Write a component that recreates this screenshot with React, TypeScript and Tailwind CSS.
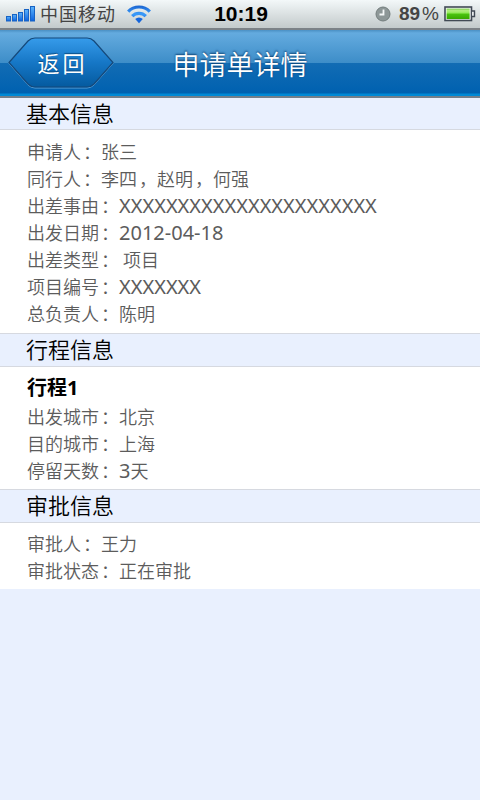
import { Fragment } from "react";

type Row = { label: string; value: string; gap?: boolean };

const basic: Row[] = [
  { label: "申请人", value: "张三" },
  { label: "同行人", value: "李四，赵明，何强" },
  { label: "出差事由", value: "XXXXXXXXXXXXXXXXXXXXXX" },
  { label: "出发日期", value: "2012-04-18" },
  { label: "出差类型", value: "项目", gap: true },
  { label: "项目编号", value: "XXXXXXX" },
  { label: "总负责人", value: "陈明" },
];

const trip: Row[] = [
  { label: "出发城市", value: "北京" },
  { label: "目的城市", value: "上海" },
  { label: "停留天数", value: "3天" },
];

const approval: Row[] = [
  { label: "审批人", value: "王力" },
  { label: "审批状态", value: "正在审批" },
];

// Latin runs are set slightly larger; full-width punctuation gets a little room before it.
function Mixed({ text }: { text: string }) {
  return (
    <>
      {text.split(/([：，]|[A-Za-z0-9-]+)/).map((part, i) => {
        if (/^[：，]$/.test(part)) {
          return (
            <span key={i} className="pl-[2px]">
              {part}
            </span>
          );
        }
        if (/^[A-Za-z0-9-]+$/.test(part)) {
          return (
            <span key={i} className="text-[20px] leading-none font-normal">
              {part}
            </span>
          );
        }
        return <Fragment key={i}>{part}</Fragment>;
      })}
    </>
  );
}

function Rows({ rows }: { rows: Row[] }) {
  return (
    <dl className="text-[18px] leading-[27px] font-[350] text-[#5c5c5c]">
      {rows.map((row) => (
        <div key={row.label} className="flex h-[27px] items-baseline">
          <dt className="whitespace-nowrap">
            <Mixed text={row.label + "："} />
          </dt>
          <dd className={row.gap ? "pl-1" : ""}>
            <Mixed text={row.value} />
          </dd>
        </div>
      ))}
    </dl>
  );
}

function SectionTitle({ children }: { children: string }) {
  return (
    <h2 className="border-y border-[#d6d9e0] bg-[#e9f0fe] px-[26px] pb-[2px] text-[22px] leading-[30px] font-[350] text-black">
      {children}
    </h2>
  );
}

function Signal() {
  return (
    <svg width="30" height="16" viewBox="0 0 30 16" aria-hidden="true">
      <defs>
        <linearGradient id="sig" x1="0" y1="0" x2="0" y2="1">
          <stop offset="0" stopColor="#5cb4fb" />
          <stop offset="1" stopColor="#0c62e0" />
        </linearGradient>
      </defs>
      {[5, 7, 9, 12, 15].map((h, i) => (
        <rect key={h} x={0.5 + i * 6} y={15.5 - h} width="4" height={h - 0.5} fill="url(#sig)" stroke="#1763c4" strokeWidth="1" />
      ))}
    </svg>
  );
}

function Wifi() {
  return (
    <svg width="26" height="20" viewBox="0 0 26 20" aria-hidden="true">
      <defs>
        <linearGradient id="wifi" x1="0" y1="0" x2="0" y2="20" gradientUnits="userSpaceOnUse">
          <stop offset="0" stopColor="#1459c8" />
          <stop offset="0.5" stopColor="#3a9bfa" />
          <stop offset="1" stopColor="#0f5fdc" />
        </linearGradient>
      </defs>
      <g fill="none" stroke="url(#wifi)" strokeWidth="3.2">
        <path d="M2.2 7.6A15 15 0 0 1 23.8 7.6" />
        <path d="M6.2 12.2A9.4 9.4 0 0 1 19.8 12.2" />
      </g>
      <path d="M9.2 15a5.4 5.4 0 0 1 7.600 0L13 19.200Z" fill="#1465dc" />
    </svg>
  );
}

function Clock() {
  return (
    <svg width="16" height="16" viewBox="0 0 16 16" aria-hidden="true">
      <circle cx="8" cy="8" r="7" fill="#8d9797" stroke="#737d7d" />
      <path d="M8.5 3.500v5H4.500" fill="none" stroke="#f4f7f7" strokeWidth="1.8" />
    </svg>
  );
}

function Battery() {
  return (
    <svg width="32" height="16" viewBox="0 0 32 16" aria-hidden="true">
      <defs>
        <linearGradient id="bat" x1="0" y1="0" x2="0" y2="1">
          <stop offset="0" stopColor="#7ccb4c" />
          <stop offset="0.2" stopColor="#b4f080" />
          <stop offset="0.45" stopColor="#8be850" />
          <stop offset="0.5" stopColor="#4cc410" />
          <stop offset="1" stopColor="#38a800" />
        </linearGradient>
      </defs>
      <rect x="1" y="1" width="26.5" height="13.5" fill="#f3f6f6" stroke="#414a55" strokeWidth="1.6" />
      <rect x="2.6" y="2.6" width="23" height="10.4" fill="url(#bat)" />
      <path d="M28 5h2.500v5.500H28" fill="#e6eaec" stroke="#414a55" strokeWidth="1.4" />
    </svg>
  );
}

export default function App() {
  return (
    <div className="min-h-screen bg-[#e9f0fe] font-['Noto_Sans','Noto_Sans_CJK_SC',sans-serif]" lang="zh-CN">
      <div className="grid h-[30px] grid-cols-[1fr_auto_1fr] items-center border-b-2 border-[#7c8287] bg-linear-to-b from-[#f3f8f9] to-[#c3cacb] pr-1 pl-[6px] text-[#444]">
        <div className="flex items-center">
          <Signal />
          <span className="ml-1 text-[18px] leading-7 tracking-[1px]">中国移动</span>
          <span className="ml-[10px]">
            <Wifi />
          </span>
        </div>
        <time className="font-['Liberation_Sans',sans-serif] text-[21px] leading-7 font-bold text-black">10:19</time>
        <div className="flex items-center justify-end">
          <Clock />
          <span className="mr-[5px] ml-2 font-['Liberation_Sans',sans-serif] text-[19px] leading-7 font-bold">
            89<span className="ml-[2px] font-normal">%</span>
          </span>
          <Battery />
        </div>
      </div>

      <header className="grid h-[68px] grid-cols-[1fr_auto_1fr] items-center border-b-2 border-[#737f8b] bg-[linear-gradient(to_bottom,#4a90c4_0px,#64abdf_3px,#3d8dc8_33px,#126cb4_33px,#0061b0_63px,#0089d6_64px,#0089d6_66px)] px-2">
        <button type="button" className="relative h-[52px] w-[106px] text-[22px] leading-[52px] tracking-[3px] text-white">
          <svg className="absolute inset-0" width="106" height="52" viewBox="0 0 106 52" aria-hidden="true">
            <defs>
              <linearGradient id="back" x1="0" y1="0" x2="0" y2="1">
                <stop offset="0" stopColor="#369bea" />
                <stop offset="0.5" stopColor="#1677c6" />
                <stop offset="1" stopColor="#045a9f" />
              </linearGradient>
            </defs>
            <path d="M1 26.500 20 5Q23 2 27 2H79Q83 2 86 5L105 26.500 86 48Q83 51 79 51H27Q23 51 20 48Z" fill="none" stroke="#5a9fd5" strokeWidth="1" />
            <path d="M1 25.500 20 4Q23 1 27 1H79Q83 1 86 4L105 25.500 86 47Q83 50 79 50H27Q23 50 20 47Z" fill="url(#back)" stroke="#15497b" strokeWidth="1.2" />
          </svg>
          <span className="relative pl-[3px] text-shadow-[0_-1px_1px_#0a4a80]">返回</span>
        </button>
        <h1 className="pt-1 text-[27px] leading-9 font-[350] text-white text-shadow-[0_-1px_2px_#0b3f70]">申请单详情</h1>
      </header>

      <main>
        <section>
          <h2 className="border-b border-[#d6d9e0] bg-[#e9f0fe] px-[26px] pb-px text-[22px] leading-[30px] font-[350] text-black">基本信息</h2>
          <div className="bg-white px-[27px] pt-[9px] pb-[5px]">
            <Rows rows={basic} />
          </div>
        </section>
        <section>
          <SectionTitle>行程信息</SectionTitle>
          <div className="bg-white px-[27px] pt-1 pb-1">
            <h3 className="text-[20px] leading-[33px] font-bold text-black">行程1</h3>
            <Rows rows={trip} />
          </div>
        </section>
        <section>
          <SectionTitle>审批信息</SectionTitle>
          <div className="bg-white px-[27px] pt-2 pb-1">
            <Rows rows={approval} />
          </div>
        </section>
      </main>
    </div>
  );
}
